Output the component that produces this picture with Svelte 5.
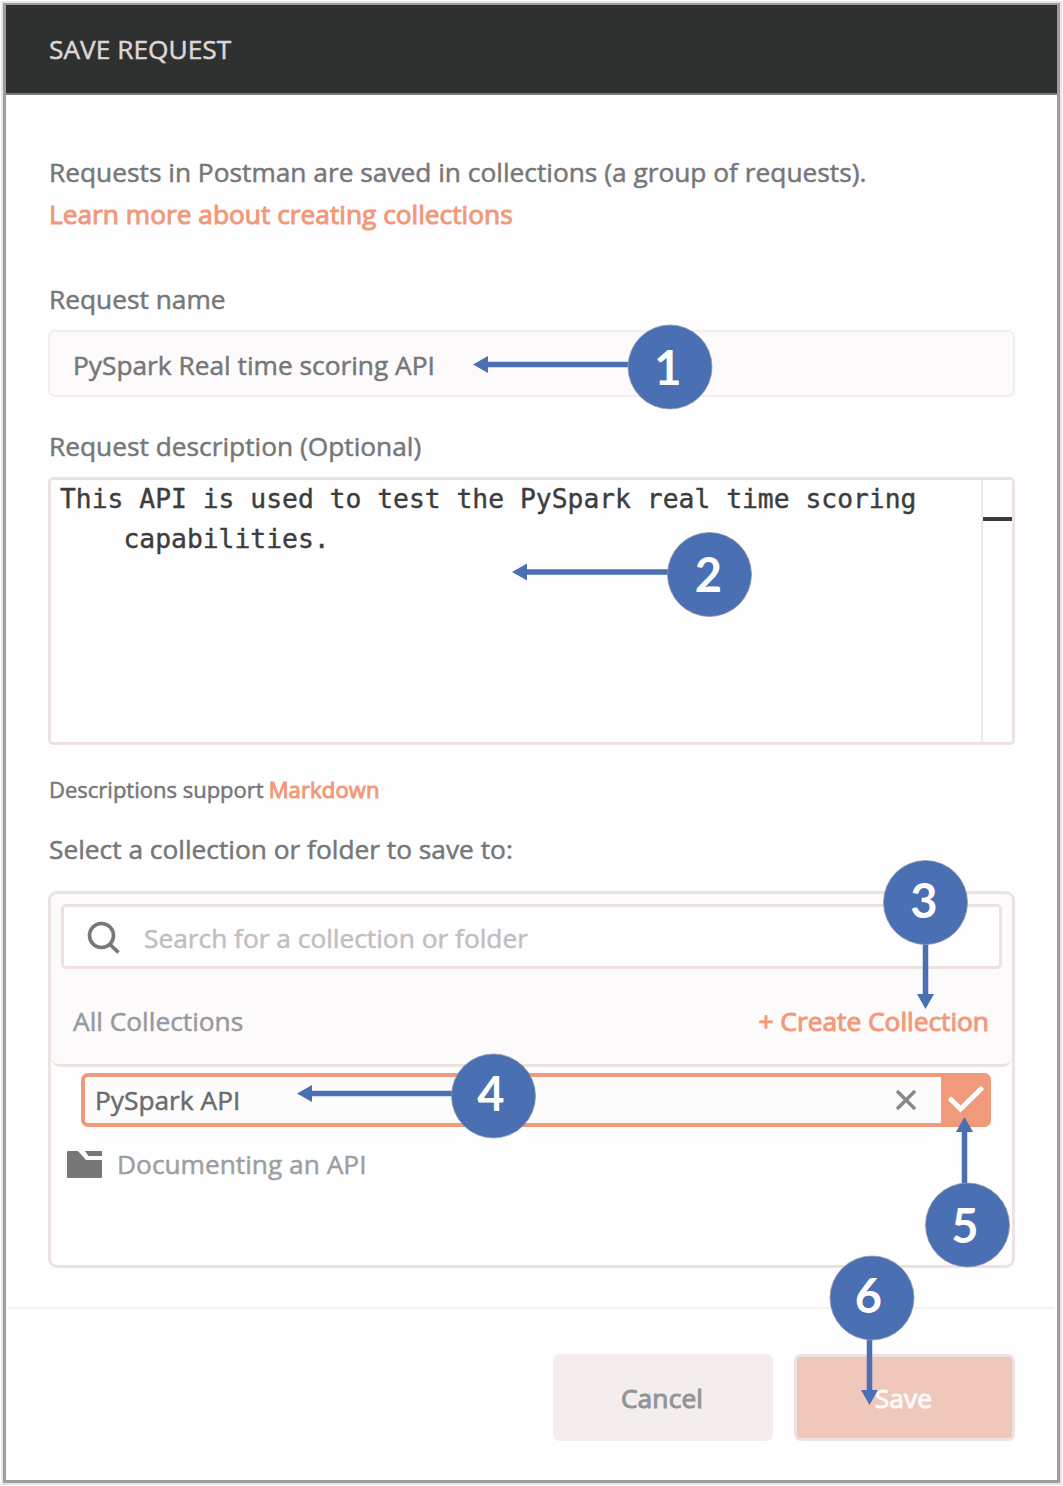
<script>
  let requestName = $state('PySpark Real time scoring API');
  let collectionName = $state('PySpark API');

  const R = 42;
  // Numbered callouts: circle centre, digit anchor, arrow start and arrow tip
  const callouts = [
    { n: 1, x: 670, y: 367, text: [668, 384.5], from: [640, 364.5], tip: [473, 364.5] },
    { n: 2, x: 709.5, y: 574.5, text: [708.5, 592], from: [680, 572], tip: [512, 572] },
    { n: 3, x: 925.5, y: 902.5, text: [924, 917.5], from: [925.5, 930], tip: [925.5, 1009] },
    { n: 4, x: 493.5, y: 1096, text: [491, 1111], from: [460, 1093.5], tip: [297, 1093.5] },
    { n: 5, x: 967.5, y: 1225, text: [965, 1243], from: [964.5, 1200], tip: [964.5, 1117] },
    { n: 6, x: 872, y: 1298, text: [868.5, 1313], from: [869.5, 1330], tip: [869.5, 1405] }
  ];

  function arrow({ from, tip }) {
    const dx = Math.sign(tip[0] - from[0]);
    const dy = Math.sign(tip[1] - from[1]);
    const bx = tip[0] - dx * 15;
    const by = tip[1] - dy * 15;
    return {
      line: `M${from[0]} ${from[1]}L${bx} ${by}`,
      head: `M${tip[0]} ${tip[1]}L${bx + dy * 8.5} ${by + dx * 8.5}L${bx - dy * 8.5} ${by - dx * 8.5}Z`
    };
  }
</script>

<div class="stage">
  <section class="dialog">
    <header><span>SAVE REQUEST</span></header>

    <main>
      <p class="intro">
        <span>Requests in Postman are saved in collections (a group of requests).</span>
        <a class="learn">Learn more about creating collections</a>
      </p>

      <div class="label name-label"><span>Request name</span></div>
      <div class="field"><span>{requestName}</span></div>

      <div class="label desc-label"><span>Request description (Optional)</span></div>
      <div class="editor">
        <div class="code">
          <div>This API is used to test the PySpark real time scoring</div>
          <div class="wrapped">capabilities.</div>
        </div>
        <div class="ruler"><i></i></div>
      </div>

      <div class="hint"><span>Descriptions support</span><a>Markdown</a></div>
      <div class="label select-label"><span>Select a collection or folder to save to:</span></div>

      <div class="picker">
        <div class="top">
          <div class="search">
            <svg width="34" height="34" viewBox="0 0 34 34">
              <circle cx="14.5" cy="14.5" r="12" />
              <path d="M22.5 23L31.5 31.5" />
            </svg>
            <span>Search for a collection or folder</span>
          </div>
          <div class="bar">
            <span>All Collections</span>
            <a>+ Create Collection</a>
          </div>
        </div>
        <div class="create">
          <span>{collectionName}</span>
          <svg class="x" width="22" height="22" viewBox="0 0 22 22"><path d="M2 2L20 20M20 2L2 20" /></svg>
          <div class="ok">
            <svg width="36" height="28" viewBox="0 0 36 28"><path d="M3 13.5L12.5 23L33 3" /></svg>
          </div>
        </div>
        <div class="row">
          <svg width="35" height="27" viewBox="0 0 35 27">
            <path d="M1 0H11L19 9H35V26Q35 27 34 27H1Q0 27 0 26V1Q0 0 1 0Z" />
            <path d="M18 0H35V5H21.5Z" />
          </svg>
          <span>Documenting an API</span>
        </div>
      </div>
    </main>

    <footer>
      <button class="cancel"><span>Cancel</span></button>
      <button class="save"><span>Save</span></button>
    </footer>
  </section>

  <svg class="callouts" width="1063" height="1486" viewBox="0 0 1063 1486">
    {#each callouts as c}
      {@const a = arrow(c)}
      <path class="line" d={a.line} />
      <path class="head" d={a.head} />
      <circle cx={c.x} cy={c.y} r={R} />
      <text x={c.text[0]} y={c.text[1]}>{c.n}</text>
    {/each}
  </svg>
</div>

<style>
  :global(body) { background: #fefefe; }
  .stage, .stage * { box-sizing: border-box; }
  .stage {
    position: relative;
    width: 1063px;
    height: 1486px;
    padding: 3px;
    font-family: 'Open Sans', 'Noto Sans', sans-serif;
    font-size: 26.3px;
    color: #757779;
    background: #fefefe;
    overflow: hidden;
  }
  span, a { white-space: nowrap; -webkit-text-stroke: 0.5px currentColor; }
  .dialog {
    width: 1057px;
    height: 1480px;
    border: 3px solid #9d9da1;
    box-shadow: 0 0 0 2px #ece4e3;
    background: #fefefe;
    display: flex;
    flex-direction: column;
  }
  header {
    height: 90px;
    flex: none;
    background: #2f3130;
    border-bottom: 2px solid #77797b;
    padding-left: 43px;
    display: flex;
    align-items: center;
    color: #dcd7d7;
    margin-top: -1px;
  }
  main { padding: 56px 42px 0 42px; height: 1212px; flex: none; }
  p { margin: 0; }
  .intro { display: flex; flex-direction: column; align-items: flex-start; line-height: 42px; padding-left: 1px; }
  a { color: #f1997b; -webkit-text-stroke-width: 1px; }
  .label { line-height: 36px; height: 36px; padding-left: 1px; }
  .name-label { margin-top: 46px; }
  .field {
    margin-top: 13px;
    height: 67px;
    border: 2px solid #f3eded;
    border-radius: 7px;
    background: #fcfafa;
    padding: 2px 0 0 23px;
    display: flex;
    align-items: center;
  }
  .desc-label { margin-top: 31px; }
  .editor {
    margin-top: 13px;
    height: 268px;
    border: 3px solid #ece3e1;
    border-radius: 5px;
    display: flex;
    justify-content: space-between;
  }
  .code {
    padding-left: 9px;
    font: 26.35px/39.5px 'DejaVu Sans Mono', monospace;
    color: #3c3e3d;
    white-space: nowrap;
    -webkit-text-stroke: 0.4px currentColor;
  }
  .wrapped { padding-left: 4ch; width: max-content; }
  .ruler { width: 31px; border-left: 2px solid #f0e9e7; padding-top: 37px; flex: none; }
  .ruler i { display: block; height: 4px; background: #3a3c3c; }
  .hint { margin-top: 26px; height: 36px; line-height: 36px; padding-left: 1px; font-size: 22px; display: flex; gap: 5px; }
  .hint a { letter-spacing: 0.15px; }
  .select-label { margin-top: 24px; }
  .picker {
    margin-top: 24px;
    height: 377px;
    border: 3px solid #ece3e1;
    border-radius: 9px;
  }
  .top {
    height: 173px;
    background: #fcfafa;
    border-bottom: 3px solid #ece3e1;
    border-radius: 6px 6px 9px 9px;
    padding: 10px 10px 0 10px;
  }
  .search {
    height: 65px;
    border: 3px solid #ece3e1;
    border-radius: 5px;
    background: #fefefe;
    display: flex;
    align-items: center;
    gap: 23px;
    padding: 2px 0 0 23px;
    color: #c2bebf;
  }
  .search svg { fill: none; stroke: #757779; stroke-width: 3.6; }
  .bar { height: 103px; display: flex; justify-content: space-between; align-items: center; padding: 0 13px 0 12px; color: #98999c; }
  .create {
    margin: 6px 21px 0 30px;
    height: 54px;
    border: 4px solid #f1997b;
    border-right: 0;
    border-radius: 7px;
    background: #fdfcfc;
    display: flex;
    align-items: center;
    padding-left: 10px;
    color: #6a6c6e;
  }
  .x { margin-left: auto; margin-right: 24px; stroke: #86888a; stroke-width: 3.4; fill: none; }
  .ok {
    width: 50px;
    height: 54px;
    background: #f1997b;
    border-radius: 0 7px 7px 0;
    display: flex;
    align-items: center;
    justify-content: center;
  }
  .ok svg { fill: none; stroke: #fefefe; stroke-width: 5; stroke-linecap: round; }
  .row { display: flex; align-items: center; gap: 15px; height: 36px; margin: 19px 0 0 16px; color: #9d9ea1; }
  .row svg { fill: #757778; }
  footer {
    flex: 1;
    margin: 0 3px;
    border-top: 2px solid #f6f1f1;
    display: flex;
    justify-content: flex-end;
    align-items: flex-start;
    gap: 21px;
    padding: 45px 39px 0 0;
  }
  button { font: inherit; font-size: 26.3px; width: 220px; height: 87px; border: 0; border-radius: 7px; padding: 0 2px 0 0; }
  button span { -webkit-text-stroke-width: 1px; letter-spacing: 0.15px; }
  .cancel { background: #f3edec; color: #929497; }
  .save { width: 221px; background: #efc8bb; border: 3px solid #ede2df; color: #fbf8f8; }
  .callouts { position: absolute; left: 0; top: 0; fill: #4a6fb3; }
  .line { stroke: #4a6fb3; stroke-width: 5.5; }
  .callouts circle { stroke: #8f99ad; stroke-width: 0.8; }
  text { font: 700 47px Lato, sans-serif; fill: #fefefe; text-anchor: middle; }
</style>
